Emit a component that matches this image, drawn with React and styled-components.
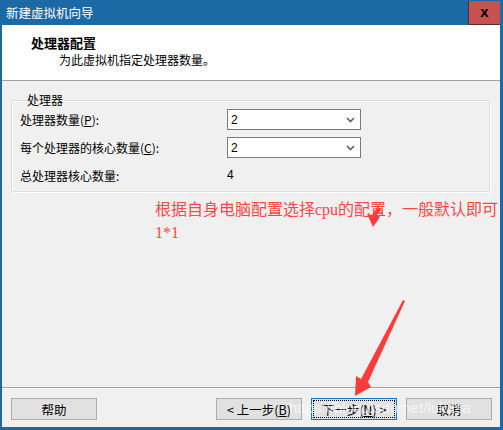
import React from 'react'
import styled, { createGlobalStyle } from 'styled-components'

const Global = createGlobalStyle`
  html, body { margin: 0; padding: 0; background: #fff; }
  body { font-family: "Noto Sans CJK SC", "Liberation Sans", sans-serif; }
`

const Window = styled.div`
  position: relative;
  width: 503px;
  height: 430px;
  box-sizing: border-box;
  border: 3px solid #1b69a5;
  border-left-width: 2px;
  border-top: 0;
  background: #f0f0f0;
  display: flex;
  flex-direction: column;
  overflow: hidden;
`

const TitleBar = styled.div`
  height: 25px;
  margin: 0 -3px 0 -2px;
  background: #1b69a5;
  display: flex;
  align-items: center;
  color: #fff;
  font-size: 12.5px;
  padding-left: 6px;
`

const TitleText = styled.span`
  flex: 1;
  line-height: 25px;
`

const CloseBtn = styled.div`
  width: 33px;
  height: 24px;
  margin-right: 2px;
  background: #c75050;
  border: 1px solid #4a3030;
  border-top: 0;
  display: flex;
  align-items: center;
  justify-content: center;
  color: #000;
  font-family: "Liberation Sans", sans-serif;
  font-weight: bold;
  font-size: 15px;
  line-height: 1;
  padding-bottom: 2px;
  box-sizing: border-box;
`

const Header = styled.div`
  height: 56px;
  background: #fff;
  border-bottom: 1px solid #a0a0a0;
  padding: 10px 0 0 29px;
  box-sizing: border-box;
`

const HeaderTitle = styled.div`
  font-size: 13px;
  font-weight: bold;
  line-height: 16px;
  color: #000;
`

const HeaderSub = styled.div`
  font-size: 12px;
  line-height: 16px;
  margin: 1px 0 0 28px;
  color: #000;
`

const Body = styled.div`
  flex: 1;
  padding: 11px 10px 0 9px;
  border-bottom: 1px solid #a0a0a0;
`

const Group = styled.fieldset`
  margin: 0;
  padding: 1px 8px 5px 8px;
  border: 1px solid #dcdcdc;
  border-radius: 2px;
  box-shadow: inset 1px 1px 0 #fff, 1px 1px 0 #fff;
  display: grid;
  grid-template-columns: 207px 134px;
  row-gap: 7px;
  align-items: center;
`

const Legend = styled.legend`
  font-size: 12px;
  line-height: 16px;
  padding: 0 1px;
  margin-left: 6px;
`

const Label = styled.div`
  font-size: 12px;
  line-height: 21px;
  color: #000;
`

const Key = styled.span`
  text-decoration: underline;
`

const Select = styled.div`
  height: 21px;
  box-sizing: border-box;
  background: #fff;
  border: 1px solid #7a7a7a;
  display: flex;
  align-items: center;
  justify-content: space-between;
  padding: 0 5px 0 3px;
  font-family: "Liberation Sans", sans-serif;
  font-size: 12px;
`

const Value = styled.div`
  font-family: "Liberation Sans", sans-serif;
  font-size: 12px;
  line-height: 21px;
`

const Note = styled.div`
  margin: 6px 0 0 144px;
  color: #ff4646;
  font-family: "Liberation Serif", "Noto Sans CJK SC", serif;
  font-size: 16px;
  line-height: 23px;
  white-space: nowrap;
`

const Footer = styled.div`
  height: 39px;
  display: flex;
  align-items: flex-start;
  padding: 9px 8px 0 9px;
  border-top: 1px solid #fff;
  box-sizing: border-box;
  gap: 9px;
`

const Button = styled.div`
  width: 86px;
  height: 22px;
  box-sizing: border-box;
  background: #e1e1e1;
  border: 1px solid ${p => (p.$focused ? '#0078d7' : '#adadad')};
  outline: ${p => (p.$focused ? '1px dotted #000' : 'none')};
  outline-offset: -3px;
  display: flex;
  align-items: center;
  justify-content: center;
  font-size: 12.5px;
  color: #000;
  margin-right: ${p => p.$push || 0}px;
`

const Watermark = styled.div`
  position: absolute;
  left: 287px;
  top: 399px;
  font-family: "Liberation Sans", sans-serif;
  font-size: 15px;
  color: rgba(255, 255, 255, 0.7);
  pointer-events: none;
  white-space: nowrap;
`

const Overlay = styled.svg`
  position: absolute;
  left: -2px;
  top: 0;
  pointer-events: none;
`

function Chevron() {
  return (
    <svg width="9" height="6" viewBox="0 0 9 6">
      <path d="M1 1 L4.5 4.5 L8 1" fill="none" stroke="#606060" strokeWidth="1.6" />
    </svg>
  )
}

export default function App() {
  return (
    <>
      <Global />
      <Window>
        <TitleBar>
          <TitleText>新建虚拟机向导</TitleText>
          <CloseBtn>x</CloseBtn>
        </TitleBar>
        <Header>
          <HeaderTitle>处理器配置</HeaderTitle>
          <HeaderSub>为此虚拟机指定处理器数量。</HeaderSub>
        </Header>
        <Body>
          <Group>
            <Legend>处理器</Legend>
            <Label>处理器数量(<Key>P</Key>):</Label>
            <Select>2<Chevron /></Select>
            <Label>每个处理器的核心数量(<Key>C</Key>):</Label>
            <Select>2<Chevron /></Select>
            <Label>总处理器核心数量:</Label>
            <Value>4</Value>
          </Group>
          <Note>
            根据自身电脑配置选择cpu的配置，一般默认即可
            <br />
            1*1
          </Note>
        </Body>
        <Footer>
          <Button $push={110}>帮助</Button>
          <Button>&lt; 上一步(<Key>B</Key>)</Button>
          <Button $focused>下一步(<Key>N</Key>) &gt;</Button>
          <Button>取消</Button>
        </Footer>
        <Watermark>https://blog.csdn.net/lukasa</Watermark>
        <Overlay width="503" height="430" viewBox="0 0 503 430">
          <polygon points="378,207 381,209 377,215 380,217 373,227 367,214 372,215" fill="#ff3b3b" />
          <polygon points="403,300 405,301 368,382 371,387 355,396 356,376 361,379" fill="#ff3b3b" />
        </Overlay>
      </Window>
    </>
  )
}
